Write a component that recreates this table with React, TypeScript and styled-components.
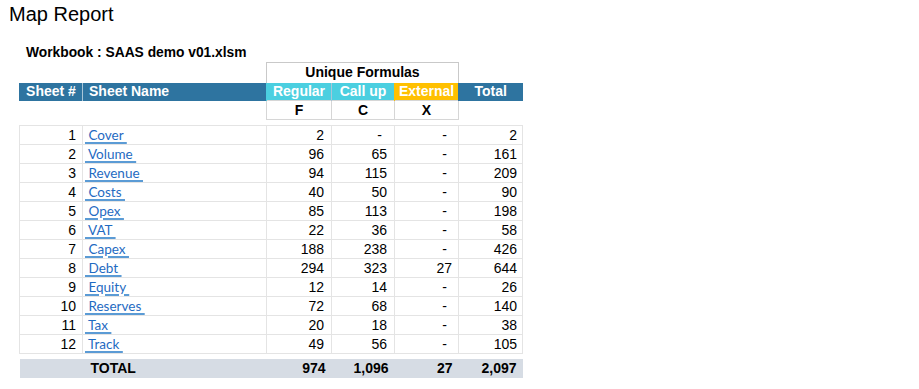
import styled, { createGlobalStyle } from "styled-components";

type Sheet = {
  no: number;
  name: string;
  regular: number;
  callUp: number | null;
  external: number | null;
};

const sheets: Sheet[] = [
  { no: 1, name: "Cover", regular: 2, callUp: null, external: null },
  { no: 2, name: "Volume", regular: 96, callUp: 65, external: null },
  { no: 3, name: "Revenue", regular: 94, callUp: 115, external: null },
  { no: 4, name: "Costs", regular: 40, callUp: 50, external: null },
  { no: 5, name: "Opex", regular: 85, callUp: 113, external: null },
  { no: 6, name: "VAT", regular: 22, callUp: 36, external: null },
  { no: 7, name: "Capex", regular: 188, callUp: 238, external: null },
  { no: 8, name: "Debt", regular: 294, callUp: 323, external: 27 },
  { no: 9, name: "Equity", regular: 12, callUp: 14, external: null },
  { no: 10, name: "Reserves", regular: 72, callUp: 68, external: null },
  { no: 11, name: "Tax", regular: 20, callUp: 18, external: null },
  { no: 12, name: "Track", regular: 49, callUp: 56, external: null },
];

const fmt = (n: number) => n.toLocaleString("en-US");

const GlobalStyle = createGlobalStyle`
  body {
    margin: 0;
    background: #ffffff;
    font-family: "Liberation Sans", Arial, sans-serif;
    color: #000000;
  }
`;

const Page = styled.div`
  width: 919px;
  height: 389px;
  overflow: hidden;
  padding: 3px 0 0 9px;
  box-sizing: border-box;
`;

const Title = styled.h1`
  margin: 0;
  font-size: 20px;
  font-weight: normal;
  line-height: 22px;
`;

const Workbook = styled.div`
  margin: 20px 0 0 17px;
  font-size: 13.8px;
  font-weight: bold;
  line-height: 16px;
`;

const Table = styled.table`
  margin: 1px 0 0 10px;
  border-collapse: collapse;
  table-layout: fixed;
  width: 503px;
`;

const Row = styled.tr<{ $h: number }>`
  height: ${(p) => p.$h}px;
`;

const Cell = styled.td<{ $align?: "left" | "right"; $pr?: number }>`
  padding: 0 ${(p) => p.$pr ?? 6}px 0 ${(p) => (p.$align === "left" ? 2 : 2)}px;
  text-align: ${(p) => p.$align ?? "right"};
  font-size: 14px;
  line-height: 17px;
  border: 1px solid #e4e4e4;
  white-space: nowrap;
`;

const Blank = styled.td`
  padding: 0;
  border: none;
`;

const GroupHead = styled.td`
  padding: 0;
  text-align: center;
  font-size: 14px;
  font-weight: bold;
  line-height: 17px;
  border: 1px solid #c9c9c9;
  border-bottom: none;
`;

const Head = styled.th<{ $bg: string; $divider?: boolean; $align?: "left" | "center" }>`
  padding: 0 0 0 ${(p) => (p.$align === "left" ? 6 : 0)}px;
  background: ${(p) => p.$bg};
  color: #ffffff;
  font-size: 14px;
  font-weight: bold;
  line-height: 17px;
  text-align: ${(p) => p.$align ?? "center"};
  border-left: 1px solid ${(p) => (p.$divider ? "#a9c6d8" : p.$bg)};
  white-space: nowrap;
`;

const Code = styled.td`
  padding: 0;
  text-align: center;
  font-size: 14px;
  font-weight: bold;
  line-height: 17px;
  border: 1px solid #d6d6d6;
`;

const SheetLink = styled.a`
  font-family: Lato, "Open Sans", sans-serif;
  font-size: 13.5px;
  color: #1f6bc2;
  text-decoration: underline;
  text-decoration-color: #5b9bd5;
  text-decoration-thickness: 2px;
  text-underline-offset: 2px;
  white-space: pre;
`;

const Dash = styled.span`
  padding-right: 5px;
`;

const TotalCell = styled.td<{ $align?: "left" | "right" }>`
  padding: 0 ${(p) => (p.$align === "left" ? 0 : 6)}px 0 ${(p) => (p.$align === "left" ? 8 : 0)}px;
  background: #d6dce4;
  text-align: ${(p) => p.$align ?? "right"};
  font-size: 14px;
  font-weight: bold;
  line-height: 17px;
  border: none;
`;

const value = (n: number | null) => (n === null ? <Dash>-</Dash> : fmt(n));

export default function App() {
  const total = {
    regular: sheets.reduce((s, r) => s + r.regular, 0),
    callUp: sheets.reduce((s, r) => s + (r.callUp ?? 0), 0),
    external: sheets.reduce((s, r) => s + (r.external ?? 0), 0),
  };

  return (
    <>
      <GlobalStyle />
      <Page>
        <Title>Map Report</Title>
        <Workbook>Workbook : SAAS demo v01.xlsm</Workbook>
        <Table>
          <colgroup>
            <col style={{ width: 63 }} />
            <col style={{ width: 184 }} />
            <col style={{ width: 65 }} />
            <col style={{ width: 63 }} />
            <col style={{ width: 64 }} />
            <col style={{ width: 64 }} />
          </colgroup>
          <tbody>
            <Row $h={20}>
              <Blank />
              <Blank />
              <GroupHead colSpan={3}>Unique Formulas</GroupHead>
              <Blank />
            </Row>
            <Row $h={18}>
              <Head $bg="#2e74a0">Sheet #</Head>
              <Head $bg="#2e74a0" $divider $align="left">
                Sheet Name
              </Head>
              <Head $bg="#4bcfe0">Regular</Head>
              <Head $bg="#4bcfe0" $divider>
                Call up
              </Head>
              <Head $bg="#ffc000">External</Head>
              <Head $bg="#2e74a0">Total</Head>
            </Row>
            <Row $h={19}>
              <Blank />
              <Blank />
              <Code>F</Code>
              <Code>C</Code>
              <Code>X</Code>
              <Blank />
            </Row>
            <Row $h={6}>
              <Blank colSpan={6} />
            </Row>
            {sheets.map((s) => (
              <Row $h={19} key={s.no}>
                <Cell>{s.no}</Cell>
                <Cell $align="left" $pr={0}>
                  <SheetLink href="#">{` ${s.name} `}</SheetLink>
                </Cell>
                <Cell $pr={7}>{value(s.regular)}</Cell>
                <Cell $pr={7}>{value(s.callUp)}</Cell>
                <Cell $pr={6}>{value(s.external)}</Cell>
                <Cell $pr={5}>
                  {fmt(s.regular + (s.callUp ?? 0) + (s.external ?? 0))}
                </Cell>
              </Row>
            ))}
            <Row $h={5}>
              <Blank colSpan={6} />
            </Row>
            <Row $h={19}>
              <TotalCell />
              <TotalCell $align="left">TOTAL</TotalCell>
              <TotalCell>{fmt(total.regular)}</TotalCell>
              <TotalCell>{fmt(total.callUp)}</TotalCell>
              <TotalCell>{fmt(total.external)}</TotalCell>
              <TotalCell>
                {fmt(total.regular + total.callUp + total.external)}
              </TotalCell>
            </Row>
          </tbody>
        </Table>
      </Page>
    </>
  );
}
